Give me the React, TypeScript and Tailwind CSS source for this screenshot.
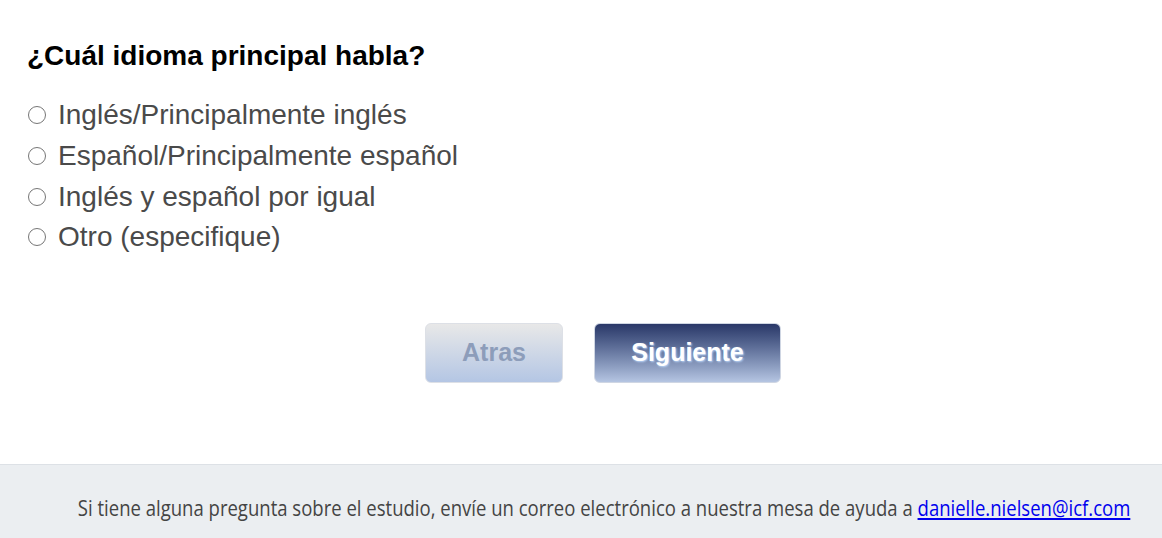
import React from "react";

const options = [
  "Inglés/Principalmente inglés",
  "Español/Principalmente español",
  "Inglés y español por igual",
  "Otro (especifique)",
];

export default function App() {
  return (
    <div className="w-[1162px] h-[538px] bg-white flex flex-col font-['Liberation_Sans',Arial,sans-serif]">
      <div className="flex-1 flex flex-col">
        <h1 className="pl-[27px] pt-[40px] text-[28px] leading-[32px] font-bold text-black">
          ¿Cuál idioma principal habla?
        </h1>
        <div className="pl-[27px] pt-[23px] flex flex-col">
          {options.map((o) => (
            <label key={o} className="flex items-center h-[40.67px] text-[28px] text-[#4a4a4a]">
              <span className="w-[18px] h-[18px] rounded-full border border-[#767676] bg-white mr-[12px] ml-[1px]" />
              <span>{o}</span>
            </label>
          ))}
        </div>
        <div className="flex pl-[425px] pt-[65px] gap-[31px]">
          <button className="w-[138px] h-[60px] rounded-[6px] border border-[#dde0e6] bg-gradient-to-b from-[#e8e8e8] to-[#b4c6e4] text-[25px] font-bold text-[#8d9dba]">
            Atras
          </button>
          <button className="w-[187px] h-[60px] rounded-[6px] border border-[#cfd6e3] bg-gradient-to-b from-[#2a3868] to-[#b5c5e2] text-[25px] font-bold text-white [text-shadow:1px_1px_2px_rgba(190,220,255,0.9)]">
            Siguiente
          </button>
        </div>
      </div>
      <footer className="h-[74px] bg-[#ebeef1] border-t border-[#dde1e6] flex justify-end items-center pr-[32px] pt-[14px]">
        <p className="inline-block whitespace-nowrap text-[21px] text-[#444] font-['Open_Sans',sans-serif] scale-x-[0.882] origin-right">
          Si tiene alguna pregunta sobre el estudio, envíe un correo electrónico a nuestra mesa de ayuda a{" "}
          <a href="#" className="text-[#0000ee] underline">danielle.nielsen@icf.com</a>
        </p>
      </footer>
    </div>
  );
}
